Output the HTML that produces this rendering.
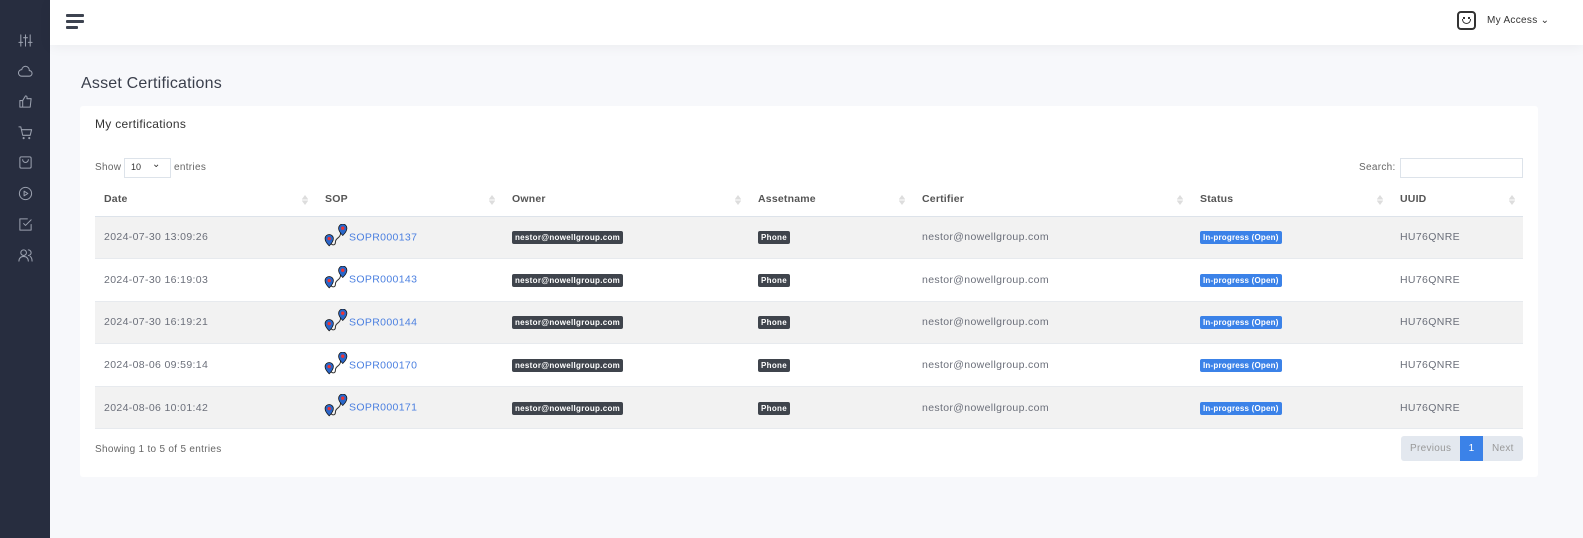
<!DOCTYPE html>
<html><head><meta charset="utf-8"><style>
*{box-sizing:border-box;margin:0;padding:0}
body{width:1583px;height:538px;overflow:hidden;background:#f7f8fb;font-family:"Liberation Sans",sans-serif;color:#555;position:relative}
.side{position:absolute;left:0;top:0;width:50px;height:538px;background:#272d3f}
.side svg{position:absolute;left:18px;width:15px;height:15px;fill:none;stroke:#9aa0ae;stroke-width:1.1;stroke-linecap:round;stroke-linejoin:round}
.hdr{position:absolute;left:50px;top:0;right:0;height:45px;background:#fff;box-shadow:0 2px 12px rgba(0,0,0,.05)}
h1{position:absolute;left:81px;top:75px;font-size:16px;font-weight:normal;color:#3a3f4c;letter-spacing:.2px}
.card{position:absolute;left:80px;top:106px;width:1458px;height:371px;background:#fff;border-radius:3px}
.t{position:absolute;font-size:11px;color:#666}
table{position:absolute;left:15px;top:77px;width:1428px;border-collapse:collapse;font-size:10.5px;letter-spacing:.35px}
th{height:33px;text-align:left;padding-left:9px;font-weight:bold;color:#555;border-bottom:1px solid #dde3ea;position:relative;letter-spacing:.2px}
th:after{content:"";position:absolute;right:8px;top:12px;width:6px;height:10px;background:linear-gradient(#ddd 45%,transparent 45%,transparent 55%,#ddd 55%);clip-path:polygon(50% 0,100% 40%,100% 60%,50% 100%,0 60%,0 40%)}
td{height:42.6px;padding-left:9px;color:#6b6f7a;border-bottom:1px solid #e7eaee}
tr.o td{background:#f2f2f2}
.b{background:#3f444c;color:#fff;font-size:8px;font-weight:bold;padding:2px 3px;border-radius:2px;letter-spacing:.3px}
.s{background:#3b82e8;color:#fff;font-size:8px;font-weight:bold;padding:2px 3px;border-radius:2px;letter-spacing:.2px}
a{color:#4a7fe0;text-decoration:none}
.pin{display:inline-block;vertical-align:middle;width:25px;height:23px;margin-left:-1px;margin-top:-4px}
</style></head><body>
<div class="side">
<svg style="top:33px" viewBox="0 0 16 16"><path d="M3 2v12M8 2v12M13 2v12M1 10h4M6 5h4M11 10h4"/></svg>
<svg style="top:64px" viewBox="0 0 16 16"><path d="M4 13h8a3 3 0 0 0 0-6 4 4 0 0 0-8-1 3.5 3.5 0 0 0 0 7z"/></svg>
<svg style="top:94px" viewBox="0 0 16 16"><path d="M2 7h3v7H2zM5 7l3-5c1.5 0 2 1 1.5 3H14l-1 9H5"/></svg>
<svg style="top:125px" viewBox="0 0 16 16"><path d="M1 2h2l2 9h8l1.5-6H4"/><circle cx="6" cy="14" r=".6"/><circle cx="12" cy="14" r=".6"/></svg>
<svg style="top:155px" viewBox="0 0 16 16"><rect x="2" y="2" width="12" height="12" rx="1.5"/><path d="M5 5a3 3 0 0 0 6 0"/></svg>
<svg style="top:186px" viewBox="0 0 16 16"><circle cx="8" cy="8" r="6.5"/><path d="M6.5 5.5v5l4-2.5z"/></svg>
<svg style="top:217px" viewBox="0 0 16 16"><path d="M14 8v6H2V2h8M6 7l2 2 6-6"/></svg>
<svg style="top:248px" viewBox="0 0 16 16"><circle cx="6" cy="5" r="3"/><path d="M1 14c0-3 2-5 5-5s5 2 5 5M11 2a3 3 0 0 1 0 6M13 9c1.5 1 2 3 2 5"/></svg>
</div>
<div class="hdr">
<div style="position:absolute;left:16px;top:14px;width:18px;height:3px;background:#3d4350;border-radius:1px"></div>
<div style="position:absolute;left:16px;top:20px;width:18px;height:3px;background:#3d4350;border-radius:1px"></div>
<div style="position:absolute;left:16px;top:26px;width:12px;height:3px;background:#3d4350;border-radius:1px"></div>
<div style="position:absolute;left:1407px;top:11px;width:19px;height:19px;border:2px solid #333;border-radius:4px"><div style="position:absolute;left:4px;top:4px;width:2px;height:2px;background:#333"></div><div style="position:absolute;left:9px;top:4px;width:2px;height:2px;background:#333"></div><div style="position:absolute;left:3px;top:6px;width:9px;height:5px;border:1.5px solid #333;border-top:none;border-radius:0 0 5px 5px"></div></div>
<div style="position:absolute;left:1437px;top:15px;font-size:10px;color:#333;letter-spacing:.3px">My Access &#8964;</div>
</div>
<h1>Asset Certifications</h1>
<div class="card">
<div class="t" style="left:15px;top:11px;font-size:12px;color:#333;letter-spacing:.3px">My certifications</div>
<div class="t" style="left:15px;top:56px;font-size:10px;letter-spacing:.3px">Show</div>
<div style="position:absolute;left:44px;top:52px;width:47px;height:20px;border:1px solid #dde3ea;font-size:9px;padding:3px 6px;color:#333">10 <span style="position:absolute;left:27px;top:0px;font-size:10px">&#8964;</span></div>
<div class="t" style="left:94px;top:56px;font-size:10px;letter-spacing:.3px">entries</div>
<div class="t" style="left:1279px;top:56px;font-size:10px;letter-spacing:.3px">Search:</div>
<div style="position:absolute;left:1320px;top:52px;width:123px;height:20px;border:1px solid #dde3ea"></div>
<table>
<tr><th style="width:221px">Date</th><th style="width:187px">SOP</th><th style="width:246px">Owner</th><th style="width:164px">Assetname</th><th style="width:278px">Certifier</th><th style="width:200px">Status</th><th>UUID</th></tr>
<tr class="o"><td>2024-07-30 13:09:26</td><td><svg class="pin" viewBox="0 0 24 22"><path d="M6 17c1 4 5 4 5 0s5-3 5-9" stroke="#333" fill="none"/><path d="M5 10a4 4 0 0 1 4 4c0 3-4 7-4 7s-4-4-4-7a4 4 0 0 1 4-4zM18 0a4 4 0 0 1 4 4c0 3-4 7-4 7s-4-4-4-7a4 4 0 0 1 4-4z" fill="#2a66c8" stroke="#111" stroke-width=".7"/><circle cx="5" cy="14" r="1.6" fill="#e33"/><circle cx="18" cy="4" r="1.6" fill="#e33"/></svg><a>SOPR000137</a></td><td><span class="b">nestor@nowellgroup.com</span></td><td><span class="b">Phone</span></td><td>nestor@nowellgroup.com</td><td><span class="s">In-progress (Open)</span></td><td>HU76QNRE</td></tr>
<tr><td>2024-07-30 16:19:03</td><td><svg class="pin" viewBox="0 0 24 22"><path d="M6 17c1 4 5 4 5 0s5-3 5-9" stroke="#333" fill="none"/><path d="M5 10a4 4 0 0 1 4 4c0 3-4 7-4 7s-4-4-4-7a4 4 0 0 1 4-4zM18 0a4 4 0 0 1 4 4c0 3-4 7-4 7s-4-4-4-7a4 4 0 0 1 4-4z" fill="#2a66c8" stroke="#111" stroke-width=".7"/><circle cx="5" cy="14" r="1.6" fill="#e33"/><circle cx="18" cy="4" r="1.6" fill="#e33"/></svg><a>SOPR000143</a></td><td><span class="b">nestor@nowellgroup.com</span></td><td><span class="b">Phone</span></td><td>nestor@nowellgroup.com</td><td><span class="s">In-progress (Open)</span></td><td>HU76QNRE</td></tr>
<tr class="o"><td>2024-07-30 16:19:21</td><td><svg class="pin" viewBox="0 0 24 22"><path d="M6 17c1 4 5 4 5 0s5-3 5-9" stroke="#333" fill="none"/><path d="M5 10a4 4 0 0 1 4 4c0 3-4 7-4 7s-4-4-4-7a4 4 0 0 1 4-4zM18 0a4 4 0 0 1 4 4c0 3-4 7-4 7s-4-4-4-7a4 4 0 0 1 4-4z" fill="#2a66c8" stroke="#111" stroke-width=".7"/><circle cx="5" cy="14" r="1.6" fill="#e33"/><circle cx="18" cy="4" r="1.6" fill="#e33"/></svg><a>SOPR000144</a></td><td><span class="b">nestor@nowellgroup.com</span></td><td><span class="b">Phone</span></td><td>nestor@nowellgroup.com</td><td><span class="s">In-progress (Open)</span></td><td>HU76QNRE</td></tr>
<tr><td>2024-08-06 09:59:14</td><td><svg class="pin" viewBox="0 0 24 22"><path d="M6 17c1 4 5 4 5 0s5-3 5-9" stroke="#333" fill="none"/><path d="M5 10a4 4 0 0 1 4 4c0 3-4 7-4 7s-4-4-4-7a4 4 0 0 1 4-4zM18 0a4 4 0 0 1 4 4c0 3-4 7-4 7s-4-4-4-7a4 4 0 0 1 4-4z" fill="#2a66c8" stroke="#111" stroke-width=".7"/><circle cx="5" cy="14" r="1.6" fill="#e33"/><circle cx="18" cy="4" r="1.6" fill="#e33"/></svg><a>SOPR000170</a></td><td><span class="b">nestor@nowellgroup.com</span></td><td><span class="b">Phone</span></td><td>nestor@nowellgroup.com</td><td><span class="s">In-progress (Open)</span></td><td>HU76QNRE</td></tr>
<tr class="o"><td>2024-08-06 10:01:42</td><td><svg class="pin" viewBox="0 0 24 22"><path d="M6 17c1 4 5 4 5 0s5-3 5-9" stroke="#333" fill="none"/><path d="M5 10a4 4 0 0 1 4 4c0 3-4 7-4 7s-4-4-4-7a4 4 0 0 1 4-4zM18 0a4 4 0 0 1 4 4c0 3-4 7-4 7s-4-4-4-7a4 4 0 0 1 4-4z" fill="#2a66c8" stroke="#111" stroke-width=".7"/><circle cx="5" cy="14" r="1.6" fill="#e33"/><circle cx="18" cy="4" r="1.6" fill="#e33"/></svg><a>SOPR000171</a></td><td><span class="b">nestor@nowellgroup.com</span></td><td><span class="b">Phone</span></td><td>nestor@nowellgroup.com</td><td><span class="s">In-progress (Open)</span></td><td>HU76QNRE</td></tr>
</table>
<div class="t" style="left:15px;top:338px;font-size:10px;letter-spacing:.3px">Showing 1 to 5 of 5 entries</div>
<div style="position:absolute;left:1321px;top:330px;width:122px;height:25px;background:#e3e8ef;border-radius:3px;font-size:10px;color:#999;letter-spacing:.3px">
<span style="position:absolute;left:9px;top:7px">Previous</span>
<span style="position:absolute;left:59px;top:0;width:23px;height:25px;background:#3b82e8;color:#fff;text-align:center;line-height:25px">1</span>
<span style="position:absolute;left:91px;top:7px">Next</span></div>
</div>
</body></html>
